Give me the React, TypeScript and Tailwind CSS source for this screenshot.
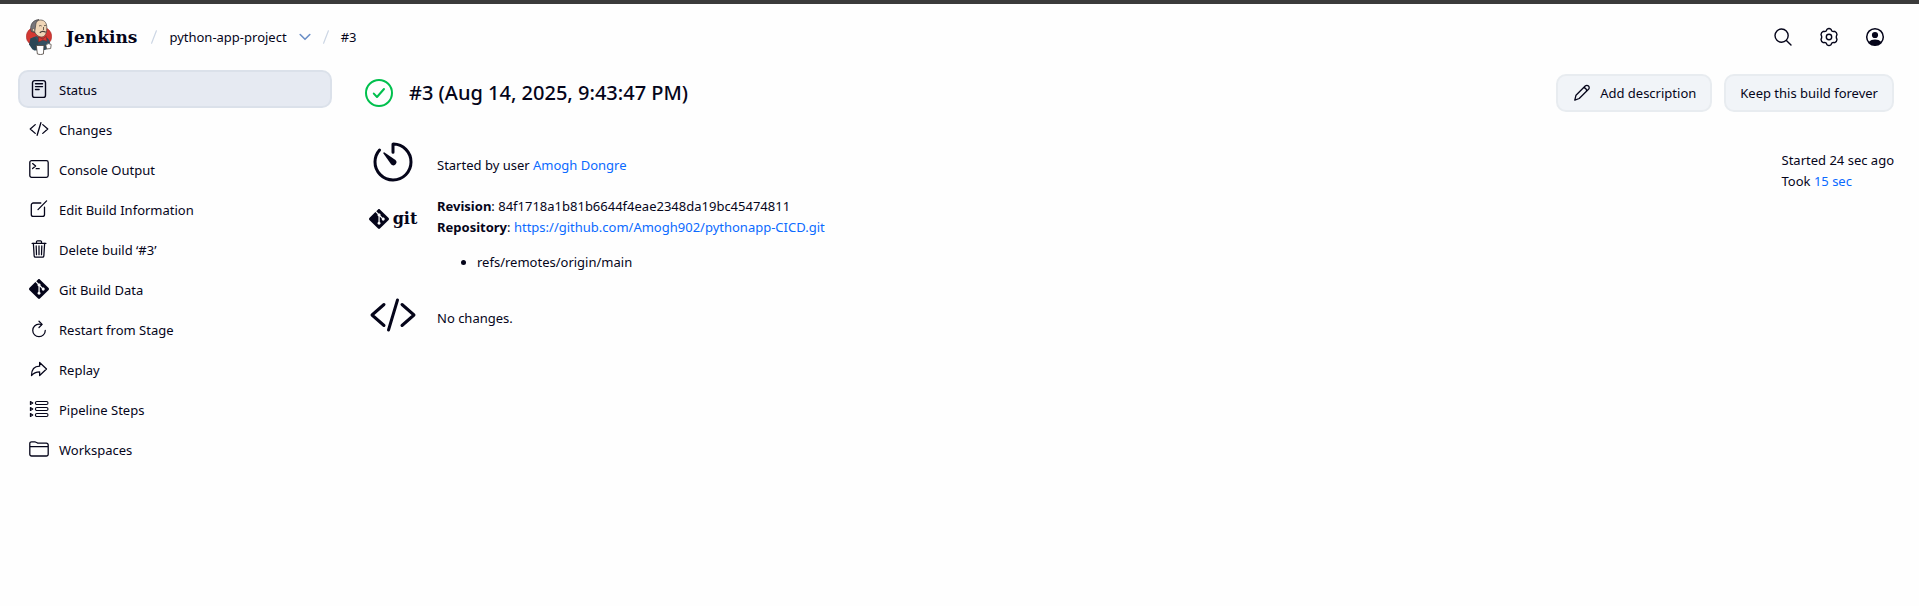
import React from 'react';
import { IoTimerOutline, IoArrowRedoOutline, IoRefreshOutline, IoTrashOutline, IoCodeSlashOutline } from 'react-icons/io5';
import { SiGit } from 'react-icons/si';

type IconProps = { className?: string };

const stroke = { fill: 'none', stroke: 'currentColor', strokeLinecap: 'round', strokeLinejoin: 'round' } as const;

const StatusIcon = ({ className }: IconProps) => (
  <svg viewBox="0 0 20 20" className={className} {...stroke} strokeWidth="1.4" aria-hidden="true">
    <rect x="3.5" y="1.6" width="13" height="16.8" rx="2.2" />
    <path d="M6.500 4.800h7M6.500 7.600h7M6.500 10.500h3.600" />
  </svg>
);

const CodeIcon = ({ className }: IconProps) => (
  <svg viewBox="0 0 512 512" className={className} {...stroke} strokeWidth="34" aria-hidden="true">
    <path d="M160 368L32 256l128-112M352 368l128-112-128-112M304 96l-96 320" />
  </svg>
);

const ConsoleIcon = ({ className }: IconProps) => (
  <svg viewBox="0 0 20 20" className={className} {...stroke} strokeWidth="1.3" aria-hidden="true">
    <rect x="0.8" y="1.7" width="18.4" height="16.6" rx="1.8" />
    <path d="M3.6 4.6l3 2.5-3 2.5M7.2 9.7h3" />
  </svg>
);

const EditIcon = ({ className }: IconProps) => (
  <svg viewBox="0 0 20 20" className={className} {...stroke} strokeWidth="1.3" aria-hidden="true">
    <path d="M11.800 4H4.300a2 2 0 0 0-2 2v9.400a2 2 0 0 0 2 2h9.200a2 2 0 0 0 2-2V8.200" />
    <path d="M17.600 1.900L9 10.600" />
  </svg>
);

const StepsIcon = ({ className }: IconProps) => (
  <svg viewBox="0 0 20 20" className={className} {...stroke} strokeWidth="1.1" aria-hidden="true">
    {[4, 10, 16].map((y) => (
      <g key={y}>
        <path d={`M1.400 ${y - 1.500}L3.800 ${y}L1.400 ${y + 1.500}z`} />
        <rect x="6.400" y={y - 1.500} width="12.600" height="3" rx="1.500" />
      </g>
    ))}
  </svg>
);

const FolderIcon = ({ className }: IconProps) => (
  <svg viewBox="0 0 20 20" className={className} {...stroke} strokeWidth="1.3" aria-hidden="true">
    <path d="M0.8 15.2V4.6a1.8 1.8 0 0 1 1.8-1.8h3.2c.5 0 .9.1 1.3.4l1 .6c.4.3.8.4 1.3.4h8a1.8 1.8 0 0 1 1.8 1.8v9.2a1.8 1.8 0 0 1-1.8 1.8H2.6a1.8 1.8 0 0 1-1.8-1.8zM0.8 7.6h18.4" />
  </svg>
);

const PencilIcon = ({ className }: IconProps) => (
  <svg viewBox="0 0 20 20" className={className} {...stroke} strokeWidth="1.3" aria-hidden="true">
    <path d="M4 12.200L13.200 3a2.200 2.200 0 0 1 3.300 3.300l-9.300 9.200-4.400 1.700zM11.600 4.600c1.600.2 2.800 1.400 3.200 3.200" />
  </svg>
);

const SearchIcon = ({ className }: IconProps) => (
  <svg viewBox="0 0 20 20" className={className} {...stroke} strokeWidth="1.4" aria-hidden="true">
    <circle cx="8.6" cy="8.6" r="6.6" />
    <path d="M13.4 13.4l4.6 4.6" />
  </svg>
);

const GearIcon = ({ className }: IconProps) => (
  <svg viewBox="0 0 20 20" className={className} {...stroke} strokeWidth="1.4" aria-hidden="true">
    <circle cx="10" cy="10" r="2.7" />
    <path d="M8 2.2Q10 .8 12 2.2L12.8 4Q14 4.8 15.8 4.3Q17.8 5.2 18 7.6Q16.600 10 18 12.4Q17.8 14.8 15.8 15.7Q14 15.2 12.8 16L12 17.8Q10 19.2 8 17.8L7.2 16Q6 15.2 4.2 15.7Q2.2 14.8 2 12.4Q3.4 10 2 7.6Q2.2 5.2 4.2 4.3Q6 4.8 7.2 4Z" />
  </svg>
);

const UserIcon = ({ className }: IconProps) => (
  <svg viewBox="0 0 20 20" className={className} aria-hidden="true">
    <circle cx="10" cy="10" r="8.3" fill="none" stroke="currentColor" strokeWidth="1.5" />
    <circle cx="10" cy="8" r="3.1" fill="currentColor" />
    <path d="M3.8 15C5.2 13.3 7.5 12.5 10 12.5s4.8.8 6.2 2.5A8.2 8.2 0 0 1 10 18.4 8.2 8.2 0 0 1 3.8 15z" fill="currentColor" />
  </svg>
);

const ChevronIcon = ({ className }: IconProps) => (
  <svg viewBox="0 0 12 8" className={className} {...stroke} strokeWidth="1.6" aria-hidden="true">
    <path d="M1.200 1.500L6 6.300l4.800-4.800" />
  </svg>
);

const JenkinsLogo = () => (
  <svg viewBox="0 0 26 36" className="h-9 w-[26px]" aria-hidden="true">
    <ellipse cx="13" cy="17.500" rx="12.800" ry="10.500" fill="#d33833" stroke="#8f2a27" strokeWidth=".4" />
    <path d="M4.500 19.500l6-2.500 4.500 3 6-1.500 2.500 3 1.500 7-6 2.500-11 .5-3.500-5z" fill="#335061" />
    <path d="M4.500 19.500L9 18l3.500 5-2 8-4-.5-3.500-5z" fill="#2b4655" />
    <path d="M8 11C7.500 5 9.500 1 14.500 1c4.500 0 6.500 3.500 6.300 8.500-.2 5-1.800 8.500-5.300 8.500-3.500 0-6.500-3-7.500-7z" fill="#f0d6b7" stroke="#49403a" strokeWidth=".7" />
    <path d="M5.200 12.500C3.400 6 6.500 1 13 .6 10.500 2.200 9.800 4 9.600 7L8.600 13.500z" fill="#77757a" stroke="#393536" strokeWidth=".6" />
    <path d="M8 9.500q-1.800-.5-1.600 1.500.4 1.800 2 1.800" fill="#f0d6b7" stroke="#49403a" strokeWidth=".5" />
    <path d="M13 7q1.500-1 2.700 0M18 6.800q1.200-.8 2.300 0M17.500 8v3" fill="none" stroke="#49403a" strokeWidth=".8" />
    <path d="M13.800 13.800q2.500-2.500 6-.5" fill="none" stroke="#49403a" strokeWidth="1.300" />
    <path d="M12.500 18l4 2 3.700-2.800.8 5-4-1.200-4.500 2z" fill="#d33833" stroke="#81201c" strokeWidth=".5" />
    <path d="M10.300 26.500h7.700l-.6 8.500q-3 1.200-6 0z" fill="#fff" stroke="#49403a" strokeWidth=".8" />
    <path d="M19.800 26q2.800-2.500 5.400-.5l-.5 4-4 .5z" fill="#fff" stroke="#49403a" strokeWidth=".7" />
  </svg>
);

const SuccessIcon = () => (
  <svg viewBox="0 0 28 28" className="size-7 text-[#00c04d]" {...stroke} strokeWidth="2" role="img" aria-label="Success">
    <circle cx="14" cy="14" r="13" />
    <path d="M8.800 14.600l3.200 3.400 7-8" />
  </svg>
);

const tasks: { label: string; Icon: React.ComponentType<IconProps> }[] = [
  { label: 'Status', Icon: StatusIcon },
  { label: 'Changes', Icon: CodeIcon },
  { label: 'Console Output', Icon: ConsoleIcon },
  { label: 'Edit Build Information', Icon: EditIcon },
  { label: 'Delete build ‘#3’', Icon: IoTrashOutline },
  { label: 'Git Build Data', Icon: SiGit },
  { label: 'Restart from Stage', Icon: IoRefreshOutline },
  { label: 'Replay', Icon: IoArrowRedoOutline },
  { label: 'Pipeline Steps', Icon: StepsIcon },
  { label: 'Workspaces', Icon: FolderIcon },
];

const Slash = () => (
  <svg viewBox="0 0 6 14" className="h-3.5 w-1.5 text-[#ccd6e4]" {...stroke} strokeWidth="1.2" aria-hidden="true">
    <path d="M5.400.8L.6 13.200" />
  </svg>
);

const buttonClass =
  'flex h-[38px] items-center gap-2 rounded-[10px] border-2 border-[#e8ecf0] bg-[#f1f4f8] px-3.5';

export default function App() {
  return (
    <div className="min-h-screen border-t-4 border-[#3b3b3b] bg-[#fefefe] font-['Noto_Sans',sans-serif] text-[13px] leading-[21px] text-[#05051a]">
      <header className="flex h-[66px] items-center justify-between pr-6 pl-[26px]">
        <nav aria-label="Breadcrumb" className="flex items-center">
          <a href="#home" className="flex items-center gap-3.5">
            <JenkinsLogo />
            <span className="font-['DejaVu_Serif',serif] text-[17px] font-bold">Jenkins</span>
          </a>
          <span className="ml-3.5 flex items-center gap-3">
            <Slash />
            <a href="#project">python-app-project</a>
            <button type="button" aria-label="Project menu" className="text-[#6b8fc7]">
              <ChevronIcon className="h-2 w-3" />
            </button>
            <Slash />
            <a href="#build">#3</a>
          </span>
        </nav>
        <div className="flex items-center gap-[26px] pr-2.5">
          <button type="button" aria-label="Search"><SearchIcon className="size-5" /></button>
          <button type="button" aria-label="Settings"><GearIcon className="size-5" /></button>
          <button type="button" aria-label="Account"><UserIcon className="size-5" /></button>
        </div>
      </header>

      <div className="flex gap-[33px] pr-[25px] pl-[18px]">
        <aside className="w-[314px] shrink-0">
          <nav aria-label="Build" className="flex flex-col gap-0.5">
            {tasks.map(({ label, Icon }, i) => (
              <a
                key={label}
                href={`#task-${i}`}
                className={
                  i === 0
                    ? 'flex h-[38px] items-center gap-2.5 rounded-[10px] border-2 border-[#dbe1ea] bg-[#e6eaf2] px-[9px]'
                    : 'flex h-[38px] items-center gap-2.5 rounded-[10px] border-2 border-transparent px-[9px]'
                }
              >
                <Icon className="size-5 shrink-0" />
                <span className="pt-0.5">{label}</span>
              </a>
            ))}
          </nav>
        </aside>

        <main className="min-w-0 grow pt-1">
          <div className="flex items-center justify-between">
            <div className="flex items-center gap-4">
              <SuccessIcon />
              <h1 className="text-[20px] leading-7 font-medium">#3 (Aug 14, 2025, 9:43:47 PM)</h1>
            </div>
            <div className="flex gap-3">
              <button type="button" className={buttonClass}>
                <PencilIcon className="size-5" />
                Add description
              </button>
              <button type="button" className={buttonClass}>Keep this build forever</button>
            </div>
          </div>

          <div className="flex items-start justify-between pt-[26px]">
            <div className="grid grid-cols-[56px_1fr] gap-x-4 gap-y-2.5">
              <IoTimerOutline className="size-12 place-self-center" />
              <p className="self-center pt-1.5">
                Started by user <a href="#user" className="text-[#0b6aff]">Amogh Dongre</a>
              </p>
              <div className="flex items-center gap-1 self-start justify-self-center pt-3">
                <SiGit className="size-5" />
                <span className="font-['DejaVu_Serif',serif] text-[16px] font-bold">git</span>
              </div>
              <div>
                <p><b>Revision</b>: 84f1718a1b81b6644f4eae2348da19bc45474811</p>
                <p>
                  <b>Repository</b>:{' '}
                  <a href="#repository" className="text-[#0b6aff]">https://github.com/Amogh902/pythonapp-CICD.git</a>
                </p>
                <ul className="list-disc pt-3.5 pb-2 pl-10">
                  <li>refs/remotes/origin/main</li>
                </ul>
              </div>
              <IoCodeSlashOutline className="size-12 place-self-center" />
              <p className="self-center pt-1.5">No changes.</p>
            </div>
            <div className="pt-3">
              <p>Started 24 sec ago</p>
              <p>Took <a href="#trend" className="text-[#0b6aff]">15 sec</a></p>
            </div>
          </div>
        </main>
      </div>
    </div>
  );
}
